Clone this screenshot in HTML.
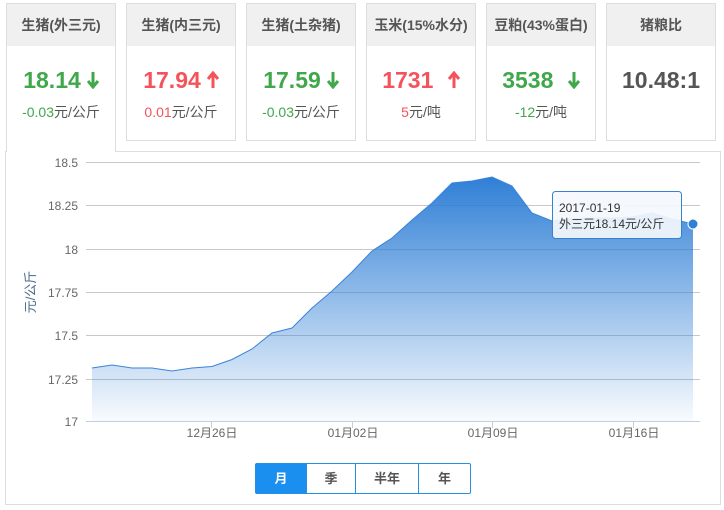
<!DOCTYPE html>
<html><head><meta charset="utf-8">
<style>
*{margin:0;padding:0;box-sizing:border-box}
body{width:724px;height:510px;background:#fff;font-family:"Liberation Sans","Noto Sans CJK SC",sans-serif;position:relative;overflow:hidden}
.card{position:absolute;top:3px;width:110px;height:138px;border:1px solid #ddd;background:#fff}
.card .h{height:42px;background:#f0f0f0;text-align:center;line-height:42px;font-size:14px;font-weight:bold;color:#555}
.card .v{text-align:center;font-size:23px;font-weight:bold;margin-top:20px;line-height:28px}
.card .s{text-align:center;font-size:14px;color:#555;margin-top:8px}
.g{color:#3fa84a}.r{color:#f5535b}
.card.act{height:149px;border-bottom:none;z-index:2}
.arr{display:inline-block;vertical-align:middle;margin-left:6px;margin-top:-4px}
.chart{position:absolute;left:5px;top:151px;width:716px;height:354px;border:1px solid #ddd}
.btns{position:absolute;left:255px;top:463px;display:flex;border:1px solid #2a8ee0;border-radius:2px;height:31px}
.btns div{text-align:center;line-height:29px;font-size:13px;font-weight:bold;color:#555;border-left:1px solid #2a8ee0}
.btns div:first-child{border-left:none;background:#1b8ff0;color:#fff}
</style></head><body>
<div class="chart"></div>
<div class="card act" style="left:6px"><div class="h">生猪(外三元)</div><div class="v g">18.14<svg class="arr" width="12" height="18"><path d="M6 1V15M1 10L6 16L11 10" stroke="#3fa84a" stroke-width="3" fill="none"/></svg></div><div class="s"><span class="g">-0.03</span>元/公斤</div></div>
<div class="card" style="left:126px"><div class="h">生猪(内三元)</div><div class="v r">17.94<svg class="arr" width="12" height="18"><path d="M6 17V3M1 8L6 2L11 8" stroke="#f5535b" stroke-width="3" fill="none"/></svg></div><div class="s"><span class="r">0.01</span>元/公斤</div></div>
<div class="card" style="left:246px"><div class="h">生猪(土杂猪)</div><div class="v g">17.59<svg class="arr" width="12" height="18"><path d="M6 1V15M1 10L6 16L11 10" stroke="#3fa84a" stroke-width="3" fill="none"/></svg></div><div class="s"><span class="g">-0.03</span>元/公斤</div></div>
<div class="card" style="left:366px"><div class="h">玉米(15%水分)</div><div class="v r">1731 <svg class="arr" width="12" height="18" style="margin-left:8px"><path d="M6 17V3M1 8L6 2L11 8" stroke="#f5535b" stroke-width="3" fill="none"/></svg></div><div class="s"><span class="r">5</span>元/吨</div></div>
<div class="card" style="left:486px"><div class="h">豆粕(43%蛋白)</div><div class="v g">3538 <svg class="arr" width="12" height="18" style="margin-left:8px"><path d="M6 1V15M1 10L6 16L11 10" stroke="#3fa84a" stroke-width="3" fill="none"/></svg></div><div class="s"><span class="g">-12</span>元/吨</div></div>
<div class="card" style="left:606px"><div class="h">猪粮比</div><div class="v" style="color:#555">10.48:1</div></div>

<svg width="724" height="510" style="position:absolute;left:0;top:0;z-index:3" font-family="Liberation Sans,Noto Sans CJK SC,sans-serif">
<defs><linearGradient id="gr" gradientUnits="userSpaceOnUse" x1="0" y1="177" x2="0" y2="421"><stop offset="0" stop-color="#2f7fd6"/><stop offset="1" stop-color="#2f7fd6" stop-opacity="0.03"/></linearGradient></defs>
<g stroke="#c8c8c8" stroke-width="1">
<line x1="86" y1="162.5" x2="700" y2="162.5"/><line x1="86" y1="205.5" x2="700" y2="205.5"/><line x1="86" y1="249.5" x2="700" y2="249.5"/><line x1="86" y1="292.5" x2="700" y2="292.5"/><line x1="86" y1="335.5" x2="700" y2="335.5"/><line x1="86" y1="379.5" x2="700" y2="379.5"/></g>
<line x1="86" y1="421.5" x2="700" y2="421.5" stroke="#c0d0e0"/>
<g stroke="#c0d0e0"><line x1="211.5" y1="421" x2="211.5" y2="428"/><line x1="352.5" y1="421" x2="352.5" y2="428"/><line x1="492.5" y1="421" x2="492.5" y2="428"/><line x1="633.5" y1="421" x2="633.5" y2="428"/></g>
<path d="M92 368L112 365L132 368L152 368L172 371L192 368L212 366.5L232 359.5L252 349L272 333L292 328L312 308L332 291L352 272L372 251L392 238L412 220L432 203L452 183L472 181L492 177L512 186L532 213L552 221L572 219L592 218L612 218L632 217L652 213L672 219L693 224L693 421L92 421Z" fill="url(#gr)"/>
<path d="M92 368L112 365L132 368L152 368L172 371L192 368L212 366.5L232 359.5L252 349L272 333L292 328L312 308L332 291L352 272L372 251L392 238L412 220L432 203L452 183L472 181L492 177L512 186L532 213L552 221L572 219L592 218L612 218L632 217L652 213L672 219L693 224" fill="none" stroke="#3a84d8" stroke-width="1"/>
<circle cx="693" cy="224" r="5" fill="#2f7fd6" stroke="#fff" stroke-width="1"/>
<g font-size="12" fill="#666" text-anchor="end">
<text x="78" y="167">18.5</text><text x="78" y="210">18.25</text><text x="78" y="254">18</text><text x="78" y="297">17.75</text><text x="78" y="340">17.5</text><text x="78" y="384">17.25</text><text x="78" y="426">17</text></g>
<g font-size="12" fill="#666" text-anchor="middle">
<text x="212" y="437">12月26日</text><text x="353" y="437">01月02日</text><text x="493" y="437">01月09日</text><text x="634" y="437">01月16日</text></g>
<text transform="translate(35,292) rotate(-90)" text-anchor="middle" font-size="13" fill="#4a6a8a">元/公斤</text>
<rect x="552.5" y="191.5" width="129" height="47" rx="3" fill="#f4f7fc" fill-opacity="0.92" stroke="#3a80cc"/>
<text x="559" y="212" font-size="12" fill="#333">2017-01-19</text>
<text x="559" y="228" font-size="12" fill="#333">外三元18.14元/公斤</text>
</svg>
<div class="btns" style="z-index:4"><div style="width:50px">月</div><div style="width:49px">季</div><div style="width:63px">半年</div><div style="width:52px">年</div></div>
</body></html>
